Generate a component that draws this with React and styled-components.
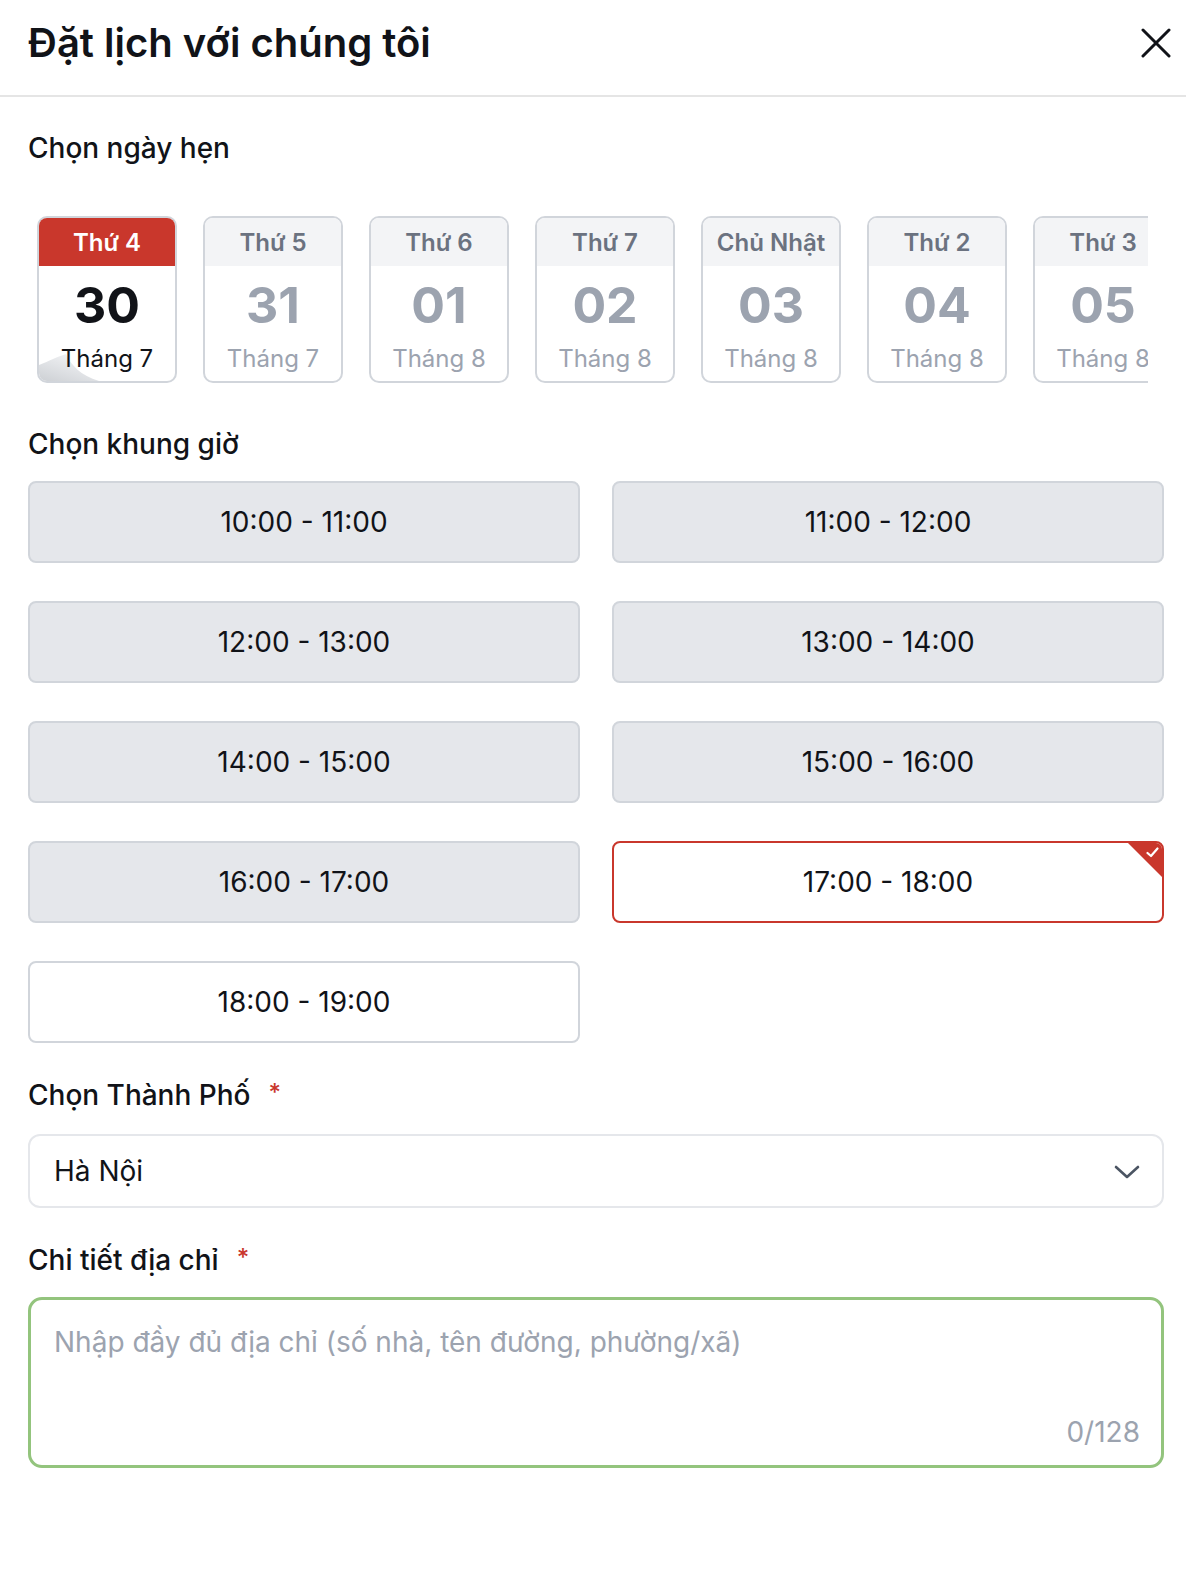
import React, { useState } from "react";
import styled, { createGlobalStyle } from "styled-components";

const GlobalStyle = createGlobalStyle`
    html, body {
        margin: 0;
        background: #ffffff;
        font-family: Inter, "Noto Sans", "Liberation Sans", sans-serif;
        color: #111827;
    }
    * {
        box-sizing: border-box;
    }
`

const Dialog = styled.div`
    width: 100%;
    background: #ffffff;
    padding-bottom: 40px;
`

const Header = styled.div`
    height: 97px;
    padding: 0 15px 10px 28px;
    display: flex;
    align-items: center;
    justify-content: space-between;
    border-bottom: 2px solid #e5e5e5;
`

const Title = styled.h1`
    margin: 0;
    font-size: 40px;
    font-weight: 600;
    color: #111318;
`

const CloseButton = styled.button`
    border: none;
    background: none;
    padding: 0;
    display: flex;
    cursor: pointer;
`

const Body = styled.div`
    padding: 0 28px;
`

const Label = styled.div`
    font-size: 28px;
    line-height: 36px;
    height: 36px;
    font-weight: 500;
    color: #111318;
    margin-top: ${(p) => p.$top}px;
    margin-bottom: ${(p) => p.$bottom}px;
`

const Star = styled.span`
    color: #c9372c;
    margin-left: 18px;
    font-size: 24px;
    line-height: 1;
    position: relative;
    top: -4px;
`

const DateStrip = styled.div`
    margin-left: 9px;
    width: 1111px;
    overflow: hidden;
    display: flex;
    gap: 26px;
`

const DateCard = styled.div`
    position: relative;
    flex: 0 0 140px;
    height: 167px;
    border: 2px solid #d1d5db;
    border-radius: 10px;
    overflow: hidden;
    display: flex;
    flex-direction: column;
    align-items: center;
    background: #ffffff;
    cursor: pointer;
`

const Curl = styled.svg`
    position: absolute;
    left: 0;
    bottom: 0;
    pointer-events: none;
`

const DayHead = styled.div`
    width: 100%;
    height: 48px;
    display: flex;
    align-items: center;
    justify-content: center;
    font-size: 24px;
    font-weight: 600;
    white-space: nowrap;
    background: ${(p) => (p.$active ? "#c9372c" : "#f3f4f6")};
    color: ${(p) => (p.$active ? "#ffffff" : "#6b7280")};
`

const DayNumber = styled.div`
    height: 78px;
    display: flex;
    align-items: center;
    font-size: 50px;
    font-weight: 700;
    color: ${(p) => (p.$active ? "#111318" : "#9ca3af")};
`

const MonthText = styled.div`
    position: relative;
    z-index: 1;
    line-height: 30px;
    font-size: 24px;
    white-space: nowrap;
    color: ${(p) => (p.$active ? "#111318" : "#9ca3af")};
`

const SlotGrid = styled.div`
    display: grid;
    grid-template-columns: 552px 552px;
    column-gap: 32px;
    row-gap: 38px;
`

const Slot = styled.button`
    position: relative;
    height: 82px;
    border-radius: 8px;
    font-family: inherit;
    font-size: 28px;
    color: #111318;
    cursor: pointer;
    overflow: hidden;
    border: 2px solid ${(p) => (p.$selected ? "#c9372c" : "#d1d5db")};
    background: ${(p) => (p.$selected || p.$free ? "#ffffff" : "#e5e7eb")};
`

const Corner = styled.span`
    position: absolute;
    top: 0;
    right: 0;
    width: 34px;
    height: 34px;
    background: #c9372c;
    clip-path: polygon(0 0, 100% 0, 100% 100%);
    display: flex;
    justify-content: flex-end;
    padding: 4px 3px 0 0;
`

const Select = styled.div`
    height: 74px;
    width: 1136px;
    border: 2px solid #e5e7eb;
    border-radius: 12px;
    display: flex;
    align-items: center;
    justify-content: space-between;
    padding: 0 20px 0 24px;
    font-size: 28px;
    color: #111318;
    cursor: pointer;
`

const AreaWrap = styled.div`
    position: relative;
    width: 1136px;
    height: 171px;
`

const TextArea = styled.textarea`
    display: block;
    width: 100%;
    height: 100%;
    resize: none;
    border: 3px solid #93c47d;
    border-radius: 14px;
    outline: none;
    padding: 24px 23px;
    font-family: inherit;
    font-size: 28px;
    line-height: 36px;
    color: #111318;
    caret-color: #111318;

    &::placeholder {
        color: #9ca3af;
    }
`

const Counter = styled.span`
    position: absolute;
    right: 24px;
    bottom: 18px;
    font-size: 28px;
    line-height: 36px;
    color: #9ca3af;
`

const days = [
    { day: "Thứ 4", num: "30", month: "Tháng 7" },
    { day: "Thứ 5", num: "31", month: "Tháng 7" },
    { day: "Thứ 6", num: "01", month: "Tháng 8" },
    { day: "Thứ 7", num: "02", month: "Tháng 8" },
    { day: "Chủ Nhật", num: "03", month: "Tháng 8" },
    { day: "Thứ 2", num: "04", month: "Tháng 8" },
    { day: "Thứ 3", num: "05", month: "Tháng 8" },
]

const slots = [
    "10:00 - 11:00",
    "11:00 - 12:00",
    "12:00 - 13:00",
    "13:00 - 14:00",
    "14:00 - 15:00",
    "15:00 - 16:00",
    "16:00 - 17:00",
    "17:00 - 18:00",
    "18:00 - 19:00",
]

export default function App() {
    const [activeDay, setActiveDay] = useState(0);
    const [slot, setSlot] = useState(7);
    const [address, setAddress] = useState("");

    return (
        <Dialog>
            <GlobalStyle />
            <Header>
                <Title>Đặt lịch với chúng tôi</Title>
                <CloseButton>
                    <svg width="30" height="30" viewBox="0 0 30 30">
                        <path d="M2 2 L28 28 M28 2 L2 28" stroke="#111318" strokeWidth="3" strokeLinecap="round" />
                    </svg>
                </CloseButton>
            </Header>
            <Body>
                <Label $top={33} $bottom={50}>Chọn ngày hẹn</Label>
                <DateStrip>
                    {days.map((d, i) => (
                        <DateCard key={d.num} onClick={() => setActiveDay(i)}>
                            <DayHead $active={i === activeDay}>{d.day}</DayHead>
                            <DayNumber $active={i === activeDay}>{d.num}</DayNumber>
                            <MonthText $active={i === activeDay}>{d.month}</MonthText>
                            {i === activeDay && (
                                <Curl width="60" height="30" viewBox="0 0 60 30">
                                    <defs>
                                        <linearGradient id="curl" x1="0" y1="1" x2="0.7" y2="0">
                                            <stop offset="0" stopColor="#cdd0d4" />
                                            <stop offset="0.6" stopColor="#e4e6e9" />
                                            <stop offset="1" stopColor="#f4f5f6" />
                                        </linearGradient>
                                    </defs>
                                    <path d="M0 14 C10 10, 20 5, 27 3 C31 13, 42 25, 60 30 L0 30 Z" fill="url(#curl)" />
                                </Curl>
                            )}
                        </DateCard>
                    ))}
                </DateStrip>
                <Label $top={43} $bottom={19}>Chọn khung giờ</Label>
                <SlotGrid>
                    {slots.map((s, i) => (
                        <Slot key={s} $selected={i === slot} $free={i === 8} onClick={() => setSlot(i)}>
                            {s}
                            {i === slot && (
                                <Corner>
                                    <svg width="13" height="11" viewBox="0 0 13 11">
                                        <path d="M1.5 6 L5 9 L11.5 1.5" stroke="#ffffff" strokeWidth="2.2" fill="none" strokeLinecap="round" strokeLinejoin="round" />
                                    </svg>
                                </Corner>
                            )}
                        </Slot>
                    ))}
                </SlotGrid>
                <Label $top={34} $bottom={21}>Chọn Thành Phố<Star>*</Star></Label>
                <Select>
                    <span>Hà Nội</span>
                    <svg width="30" height="30" viewBox="0 0 30 30">
                        <path d="M4 11 L15 21 L26 11" stroke="#4b5563" strokeWidth="2.6" fill="none" strokeLinecap="round" strokeLinejoin="round" />
                    </svg>
                </Select>
                <Label $top={34} $bottom={19}>Chi tiết địa chỉ<Star>*</Star></Label>
                <AreaWrap>
                    <TextArea
                        autoFocus
                        maxLength={128}
                        value={address}
                        onChange={(e) => setAddress(e.target.value)}
                        placeholder="Nhập đầy đủ địa chỉ (số nhà, tên đường, phường/xã)"
                    />
                    <Counter>{address.length}/128</Counter>
                </AreaWrap>
            </Body>
        </Dialog>
    )
}
